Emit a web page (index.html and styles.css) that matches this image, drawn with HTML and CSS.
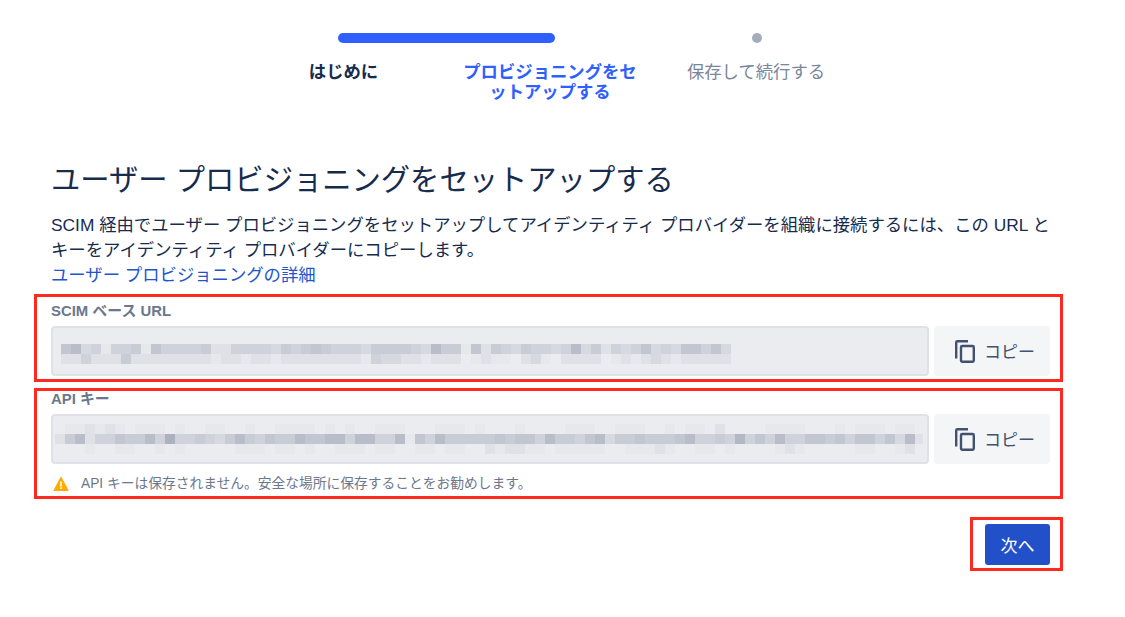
FILE: index.html
```html
<!DOCTYPE html>
<html lang="ja">
<head>
<meta charset="utf-8">
<title>ユーザー プロビジョニングをセットアップする</title>
<link rel="stylesheet" href="styles.css">
</head>
<body>
<div class="page">
  <div class="stepper">
    <div class="track"><div class="bar"></div><div class="dot"></div></div>
    <div class="labels">
      <div class="step done">はじめに</div>
      <div class="step active">プロビジョニングをセットアップする</div>
      <div class="step todo">保存して続行する</div>
    </div>
  </div>
  <h1>ユーザー プロビジョニングをセットアップする</h1>
  <p class="intro">SCIM 経由でユーザー プロビジョニングをセットアップしてアイデンティティ プロバイダーを組織に接続するには、この URL とキーをアイデンティティ プロバイダーにコピーします。<br><a href="#">ユーザー プロビジョニングの詳細</a></p>
  <section class="box box-url">
    <div class="label">SCIM ベース URL</div>
    <div class="row">
      <div class="field field-url"><div class="mosaic" data-key="url"></div></div>
      <button class="copy"><svg width="20" height="23" viewBox="0 0 20 23"><path d="M1.2 18.5V2.4C1.2 1.7 1.7 1.2 2.4 1.2H13" fill="none" stroke="#42526e" stroke-width="2.4"/><rect x="6" y="6" width="12.8" height="15.8" rx="1.2" fill="none" stroke="#42526e" stroke-width="2.4"/></svg><span>コピー</span></button>
    </div>
  </section>
  <section class="box box-key">
    <div class="label">API キー</div>
    <div class="row">
      <div class="field field-key"><div class="mosaic" data-key="api"></div></div>
      <button class="copy"><svg width="20" height="23" viewBox="0 0 20 23"><path d="M1.2 18.5V2.4C1.2 1.7 1.7 1.2 2.4 1.2H13" fill="none" stroke="#42526e" stroke-width="2.4"/><rect x="6" y="6" width="12.8" height="15.8" rx="1.2" fill="none" stroke="#42526e" stroke-width="2.4"/></svg><span>コピー</span></button>
    </div>
    <div class="warn"><svg width="16" height="16" viewBox="0 0 16 16"><path d="M8 1.5 15 14.5H1Z" fill="#ffab00" stroke="#ffab00" stroke-width="1.2" stroke-linejoin="round"/><rect x="7.2" y="5.5" width="1.6" height="5" fill="#fff"/><rect x="7.2" y="11.3" width="1.6" height="1.6" fill="#fff"/></svg><span>API キーは保存されません。安全な場所に保存することをお勧めします。</span></div>
  </section>
  <div class="foot"><div class="box-next"><button class="next">次へ</button></div></div>
</div>
<script src="mosaic.js"></script>
</body>
</html>
```
FILE: styles.css
```css
* { box-sizing: border-box; }
html, body { margin: 0; background: #fff; }
body { font-family: "Liberation Sans", "Noto Sans CJK JP", sans-serif; color: #172b4d; overflow: hidden; }
.page { width: 1125px; height: 617px; padding: 33px 62px 0 34px; }
.stepper { width: 540px; margin-left: 252px; }
.track { display: flex; align-items: center; height: 10px; padding-left: 52px; }
.bar { width: 217px; height: 10px; background: #2f5fff; border-radius: 5px; }
.dot { width: 10px; height: 10px; background: #a5adba; border-radius: 50%; margin-left: 197px; }
.labels { display: flex; margin-top: 19px; font-size: 17.35px; line-height: 20px; }
.step { text-align: center; }
.done { width: 115px; font-weight: 700; }
.active { width: 178px; margin-left: 60px; font-weight: 700; color: #2f5fff; }
.todo { width: 140px; margin-left: 47px; color: #7a869a; white-space: nowrap; }
h1 { margin: 60px 0 0 17px; font-size: 29.3px; line-height: 36px; font-weight: 400; color: #172b4d; }
.intro { margin: 15px 0 0 17px; width: 1010px; font-size: 17.35px; line-height: 25px; color: #172b4d; }
.intro a { color: #2255cc; text-decoration: none; }
.box { border: 3px solid #ff2a1f; padding-left: 14px; padding-right: 10px; width: 1029px; }
.box-url { height: 88px; margin-top: 6px; padding-top: 7px; }
.box-key { height: 111px; margin-top: 6px; padding-top: 1px; }
.label { font-size: 14.9px; line-height: 14px; font-weight: 700; color: #6b778c; }
.row { display: flex; gap: 5px; margin-top: 8px; }
.field { width: 878px; height: 50px; background: #ebecf0; border: 2px solid #dfe1e6; border-radius: 4px; }
.field-url { padding: 16px 0 0 8px; }
.field-key { padding: 8px 0 0 2px; }
.mosaic { overflow: hidden; }
.field-url .mosaic { width: 670px; }
.field-key .mosaic { width: 868px; }
.mrow { display: flex; height: 10px; }
.mrow span { flex: 0 0 10px; height: 10px; }
.l0 { background: #ebecf0; }
.l1 { background: #e6e8eb; }
.l2 { background: #dfe1e6; }
.l3 { background: #d6d9e0; }
.l4 { background: #cfd2da; }
.l5 { background: #c8ccd5; }
.l6 { background: #c2c6d0; }
.l7 { background: #b9bdc9; }
.l8 { background: #b4b8c4; }
.l9 { background: #acb1bf; }
.copy { display: flex; align-items: center; gap: 9px; width: 116px; height: 50px; border: 0; border-radius: 4px; background: #f4f5f7; color: #42526e; font: 17px "Liberation Sans", "Noto Sans CJK JP", sans-serif; padding: 0 0 0 21px; }
.copy span { margin-top: -2px; }
.warn { display: flex; align-items: center; gap: 12px; margin-top: 11px; font-size: 13.75px; line-height: 18px; color: #6b778c; padding-left: 2px; }
.foot { display: flex; justify-content: flex-end; margin-top: 18px; width: 1029px; }
.box-next { border: 3px solid #ff2a1f; width: 93px; height: 54px; padding: 4px 10px 0 12px; }
.next { display: block; width: 65px; height: 41px; border: 0; border-radius: 3px; background: #2250c8; color: #fff; font: 17px "Liberation Sans", "Noto Sans CJK JP", sans-serif; padding: 0; }
```
FILE: mosaic.js
```js
var DATA = {
  url: [
    "6734144516" + "4444522444" + "4354565444" + "3555" + "5437551625" + "4354434735" + "2434634366" + "463",
    "2242225222" + "2222212212" + "2122222222" + "1433" + "2212220121" + "1023102222" + "0121232122" + "222"
  ],
  api: [
    "0112121011" + "1010011001" + "0011110101" + "0011100011" + "1010001000" + "0111001110" + "0101102000" + "0111100010" + "1110110",
    "2572446557" + "4944543575" + "4655766774" + "7744716475" + "5555656647" + "5546735565" + "5567445484" + "6474466564" + "6646372",
    "0001001100" + "1010000011" + "1011010011" + "1011001101" + "1002122110" + "1111100111" + "2100110100" + "0012100000" + "1100120"
  ]
};

document.querySelectorAll(".mosaic").forEach(function (el) {
  DATA[el.dataset.key].forEach(function (row) {
    var r = document.createElement("div");
    r.className = "mrow";
    row.split("").forEach(function (c) {
      var s = document.createElement("span");
      s.className = "l" + c;
      r.appendChild(s);
    });
    el.appendChild(r);
  });
});
```
